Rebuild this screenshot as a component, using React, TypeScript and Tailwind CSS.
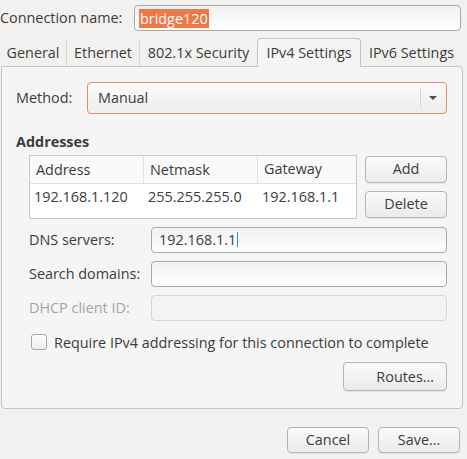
import React from "react";

const font = { fontFamily: '"Open Sans", "Noto Sans", sans-serif' };

function Btn({ children, className = "" }: { children: React.ReactNode; className?: string }) {
  return (
    <div
      className={
        "flex items-center justify-center rounded-[4px] border border-[#b4b4b0] bg-gradient-to-b from-[#fafafa] to-[#ebebea] text-[14.4px] text-[#3c3c3c] shadow-[0_1px_0_rgba(0,0,0,0.06)] " +
        className
      }
    >
      {children}
    </div>
  );
}

function Field({ value, disabled }: { value?: string; disabled?: boolean }) {
  return (
    <div
      className={
        "flex h-[26px] flex-1 items-center rounded-[4px] border px-[7px] text-[14.4px] " +
        (disabled
          ? "border-[#d6d6d4] bg-[#f3f3f3]"
          : "border-[#a9a9a5] bg-gradient-to-b from-[#f1f1f1] to-[#fefefe] text-[#3c3c3c]")
      }
    >
      {value}
      {value && <span className="ml-[1px] h-[15px] w-px bg-[#3a8fd9]" />}
    </div>
  );
}

export default function App() {
  return (
    <div className="h-[459px] w-[467px] overflow-hidden bg-[#f2f1f0] text-[#3c3c3c]" style={font}>
      {/* connection name */}
      <div className="flex items-center pt-[5px] pr-[6px]">
        <span className="w-[134px] text-[14.4px]">Connection name:</span>
        <div className="flex h-[26px] flex-1 items-center rounded-[4px] border border-[#a9a9a5] bg-gradient-to-b from-[#f1f1f1] to-[#fefefe] px-[4px]">
          <span className="bg-[#f07746] px-[1px] text-[14.4px] leading-[19px] text-white">bridge120</span>
        </div>
      </div>

      {/* tabs */}
      <div className="relative z-10 mt-[7px] flex h-[28px] items-end text-[14.4px]">
        <div className="flex h-[27px] w-[67px] items-center justify-center border-r border-[#d8d7d5]">General</div>
        <div className="flex h-[27px] w-[73px] items-center justify-center border-r border-[#d8d7d5]">Ethernet</div>
        <div className="flex h-[27px] w-[117px] items-center justify-center">802.1x Security</div>
        <div className="-mb-px flex h-[29px] w-[104px] items-center justify-center rounded-t-[4px] border border-b-0 border-[#c4c4c2] bg-[#f5f5f5]">
          IPv4 Settings
        </div>
        <div className="flex h-[27px] w-[101px] items-center justify-center">IPv6 Settings</div>
      </div>

      {/* panel */}
      <div className="mr-[4px] ml-[1px] h-[343px] rounded-b-[4px] rounded-tr-[4px] border border-[#c4c4c2] bg-[#f5f5f5] text-[14.4px]">
        <div className="flex items-center pt-[15px] pl-[14px] pr-[15px]">
          <span className="w-[71px]">Method:</span>
          <div className="flex h-[32px] flex-1 items-center rounded-[4px] border border-[#e08c6b] bg-gradient-to-b from-[#fbfbfb] to-[#ededec] pl-[10px]">
            <span className="flex-1">Manual</span>
            <span className="h-[20px] w-px bg-[#d8d8d6]" />
            <svg width="25" height="10" viewBox="0 0 25 10">
              <path d="M8 3 L16 3 L12 7 Z" fill="#4a4a4a" />
            </svg>
          </div>
        </div>

        <div className="mt-[17px] pl-[14px] font-bold">Addresses</div>

        <div className="mt-[2px] flex pl-[27px] pr-[15px]">
          <div className="h-[64px] w-[328px] border border-[#c8c8c6] bg-white">
            <div className="flex h-[28px] items-center border-b border-[#e2e2e0] bg-[#fafafa]">
              <span className="w-[114px] border-r border-[#e2e2e0] pl-[6px] leading-[27px]">Address</span>
              <span className="w-[114px] border-r border-[#e2e2e0] pl-[6px] leading-[27px]">Netmask</span>
              <span className="flex-1 pl-[6px]">Gateway</span>
            </div>
            <div className="flex h-[26px] items-center">
              <span className="w-[114px] pl-[4px]">192.168.1.120</span>
              <span className="w-[114px] pl-[4px]">255.255.255.0</span>
              <span className="flex-1 pl-[4px]">192.168.1.1</span>
            </div>
          </div>
          <div className="ml-[8px] flex flex-1 flex-col gap-[8px] pt-px">
            <Btn className="h-[27px]">Add</Btn>
            <Btn className="h-[27px]">Delete</Btn>
          </div>
        </div>

        <div className="mt-[8px] flex flex-col gap-[8px] pl-[27px] pr-[15px]">
          <div className="flex items-center">
            <span className="w-[122px]">DNS servers:</span>
            <Field value="192.168.1.1" />
          </div>
          <div className="flex items-center">
            <span className="w-[122px]">Search domains:</span>
            <Field />
          </div>
          <div className="flex items-center">
            <span className="w-[122px] text-[#a4a4a2]">DHCP client ID:</span>
            <Field disabled />
          </div>
        </div>

        <div className="mt-[11px] flex items-center pl-[29px]">
          <span className="h-[16px] w-[16px] rounded-[3px] border border-[#a9a9a5] bg-gradient-to-b from-[#fdfdfd] to-[#eeeeed]" />
          <span className="ml-[7px]">Require IPv4 addressing for this connection to complete</span>
        </div>

        <div className="mt-[9px] flex justify-end pr-[15px]">
          <Btn className="h-[29px] w-[104px] justify-end pr-[12px]">Routes…</Btn>
        </div>
      </div>

      {/* dialog buttons */}
      <div className="mt-[18px] flex justify-end gap-[9px] pr-[7px]">
        <Btn className="h-[26px] w-[82px]">Cancel</Btn>
        <Btn className="h-[26px] w-[82px]">Save…</Btn>
      </div>
    </div>
  );
}
